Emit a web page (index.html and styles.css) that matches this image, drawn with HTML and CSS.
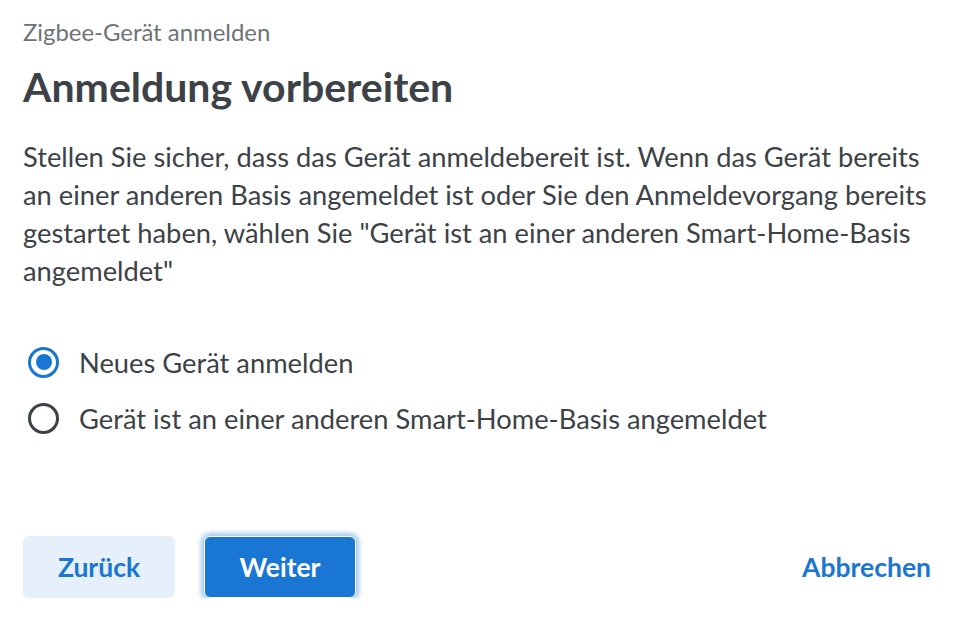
FILE: index.html
```html
<!DOCTYPE html>
<html lang="de">
<head>
    <meta charset="UTF-8">
    <title>Zigbee-Gerät anmelden</title>
    <link rel="stylesheet" href="styles.css">
</head>
<body>
    <div class="dialog">
        <div class="overline">Zigbee-Gerät anmelden</div>
        <h1 class="title">Anmeldung vorbereiten</h1>

        <p class="text">Stellen Sie sicher, dass das Gerät anmeldebereit ist. Wenn das Gerät bereits an einer anderen Basis angemeldet ist oder Sie den Anmeldevorgang bereits gestartet haben, wählen Sie "Gerät ist an einer anderen Smart-Home-Basis angemeldet"</p>

        <div class="options">
            <label class="option">
                <input type="radio" name="mode" checked>
                <span class="radio"></span>
                <span>Neues Gerät anmelden</span>
            </label>
            <label class="option">
                <input type="radio" name="mode">
                <span class="radio"></span>
                <span>Gerät ist an einer anderen Smart-Home-Basis angemeldet</span>
            </label>
        </div>

        <div class="actions">
            <button class="btn btn-secondary">Zurück</button>
            <button class="btn btn-primary">Weiter</button>
            <button class="btn btn-text">Abbrechen</button>
        </div>
    </div>
</body>
</html>
```

FILE: styles.css
```css
body {
    margin: 0;
    font-family: Lato, "Noto Sans", sans-serif;
    color: #3c4247;
    background: #fff;
}

.dialog {
    padding: 17px 38px 0 23px;
}

.overline {
    font-size: 23.9px;
    line-height: 30px;
    color: #6e7378;
}

.title {
    margin: 15px 0 0;
    font-size: 41px;
    line-height: 50px;
    font-weight: 700;
}

.text {
    margin: 26px 0 0;
    font-size: 27.3px;
    line-height: 38px;
}

.options {
    margin-top: 44px;
}

.option {
    display: flex;
    align-items: center;
    height: 56px;
    font-size: 27.3px;
    cursor: pointer;
}

.option input {
    display: none;
}

.radio {
    box-sizing: border-box;
    width: 31px;
    height: 31px;
    margin: 0 20px 0 5px;
    border: 3px solid #3c4247;
    border-radius: 50%;
    display: flex;
    align-items: center;
    justify-content: center;
}

.option input:checked + .radio {
    border-color: #1976d2;
}

.option input:checked + .radio::after {
    content: "";
    width: 16px;
    height: 16px;
    border-radius: 50%;
    background: #1976d2;
}

.actions {
    display: flex;
    align-items: center;
    gap: 29px;
    margin-top: 90px;
}

.btn {
    font-family: inherit;
    font-size: 26.5px;
    font-weight: 700;
    height: 62px;
    width: 152px;
    border-radius: 6px;
    border: none;
    cursor: pointer;
}

.btn-secondary {
    background: #e6f0fa;
    color: #1976d2;
}

.btn-primary {
    background: #1976d2;
    color: #fff;
    border: 1px solid #fff;
    box-shadow: 0 0 5px 3px rgba(25, 118, 210, 0.4);
}

.btn-text {
    margin-left: auto;
    width: auto;
    padding: 0;
    background: none;
    color: #1976d2;
}
```
